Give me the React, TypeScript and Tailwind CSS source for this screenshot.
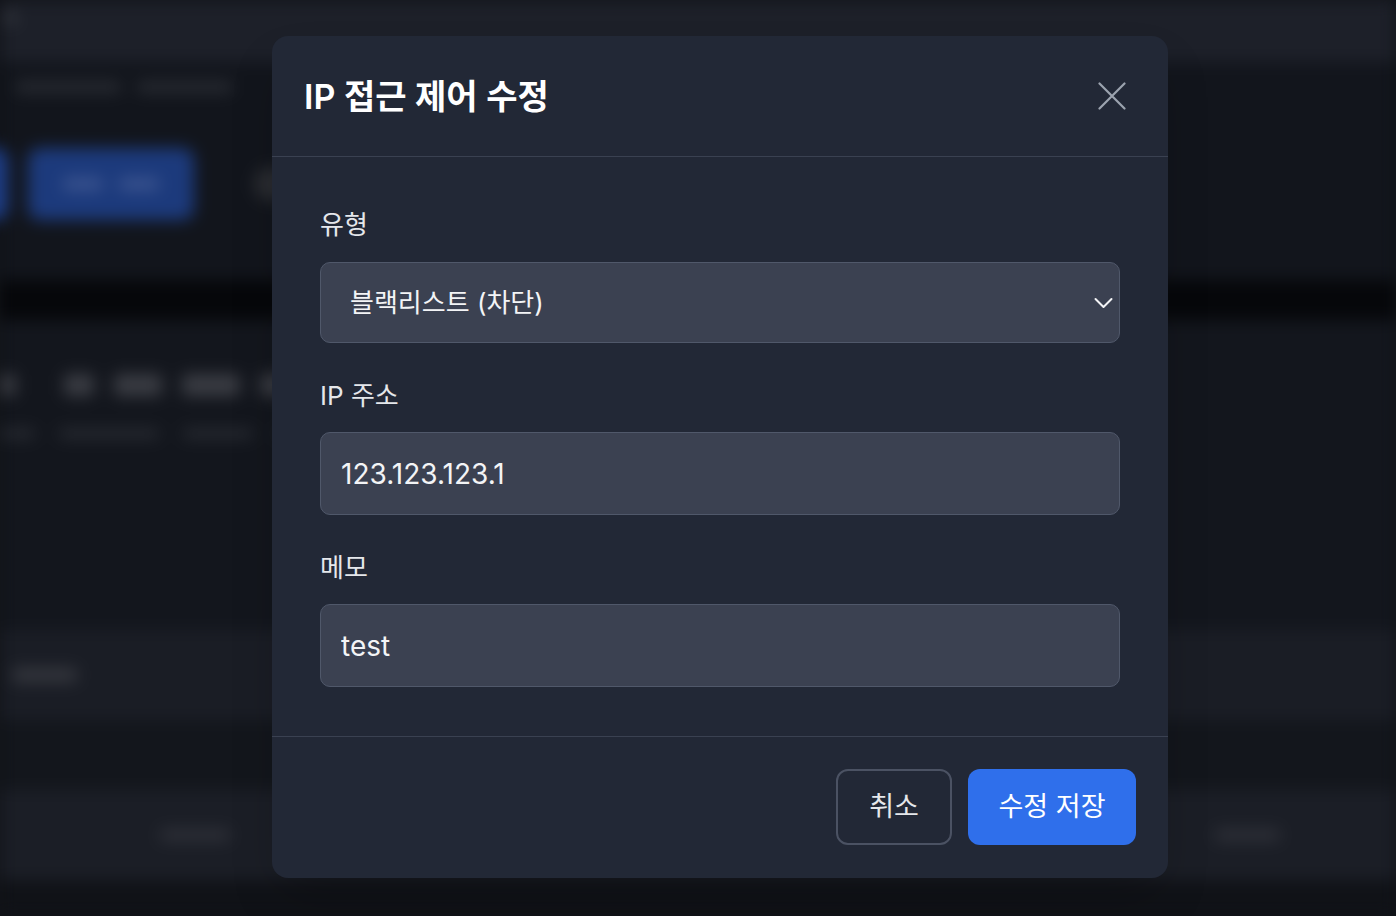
import { useState } from 'react';

function CloseIcon() {
  return (
    <svg width="28" height="28" viewBox="0 0 28 28" fill="none" stroke="#9ca3af" strokeWidth="2.2" strokeLinecap="round">
      <path d="M1.5 1.5L26.5 26.5M26.5 1.5L1.5 26.5" />
    </svg>
  );
}

function Chevron() {
  return (
    <svg width="19" height="11" viewBox="0 0 19 11" fill="none" stroke="#f3f4f6" strokeWidth="2" strokeLinecap="round" strokeLinejoin="round">
      <path d="M1.5 1.5L9.5 9.5L17.5 1.5" />
    </svg>
  );
}

// blurred page behind the dialog (unreadable, so drawn as soft blobs)
function BackgroundPage() {
  return (
    <div className="absolute inset-0 blur-[8px] flex flex-col">
      <div className="h-[62px] bg-[#1d2029] flex items-start px-1 pt-3">
        <span className="w-3 h-3 rounded-full bg-[#3a3d44]" />
      </div>
      <div className="h-[218px] bg-[#12151c] flex flex-col">
        <div className="flex items-center gap-4 pl-4 pt-[20px]">
          <span className="w-[105px] h-[10px] rounded bg-[#2b2e35]" />
          <span className="w-[95px] h-[10px] rounded bg-[#2b2e35]" />
        </div>
        <div className="flex items-center gap-5 pt-[56px] -ml-[30px]">
          <div className="w-[38px] h-[72px] rounded-xl bg-[#1d3d86]" />
          <div className="w-[166px] h-[72px] rounded-xl bg-[#1c3a7c] flex items-center justify-center gap-4">
            <span className="w-[40px] h-[12px] rounded bg-[#3c5590]" />
            <span className="w-[40px] h-[12px] rounded bg-[#3c5590]" />
          </div>
          <div className="w-[34px] h-[34px] rounded-full bg-[#2a2c31] ml-10" />
        </div>
      </div>
      <div className="h-[40px] bg-[#06070a]" />
      <div className="h-[310px] bg-[#13161d] flex flex-col pt-[52px] gap-[30px]">
        <div className="flex items-center gap-5 h-[26px]">
          <span className="w-[16px] h-[22px] rounded bg-[#3a3c43]" />
          <span className="w-[30px] h-[22px] rounded bg-[#3a3c43] ml-7" />
          <span className="w-[48px] h-[22px] rounded bg-[#3a3c43]" />
          <span className="w-[58px] h-[22px] rounded bg-[#3a3c43]" />
          <span className="w-[30px] h-[22px] rounded bg-[#3a3c43]" />
        </div>
        <div className="flex items-center gap-6 h-[10px]">
          <span className="w-[35px] h-[9px] rounded bg-[#2a2d34]" />
          <span className="w-[100px] h-[9px] rounded bg-[#2a2d34]" />
          <span className="w-[70px] h-[9px] rounded bg-[#2a2d34]" />
          <span className="w-[20px] h-[9px] rounded bg-[#2a2d34]" />
        </div>
      </div>
      <div className="h-[90px] bg-[#1a1d25] flex items-center pl-3">
        <span className="w-[65px] h-[14px] rounded bg-[#35373e]" />
      </div>
      <div className="h-[70px] bg-[#13161c]" />
      <div className="h-[90px] bg-[#1b1e26] flex items-center">
        <span className="ml-[160px] w-[70px] h-[12px] rounded bg-[#2e3038]" />
        <span className="ml-auto mr-[116px] w-[65px] h-[12px] rounded bg-[#2e3038]" />
      </div>
      <div className="flex-1 bg-[#101217]" />
    </div>
  );
}

export default function App() {
  const [type, setType] = useState('black');
  const [ip, setIp] = useState('123.123.123.1');
  const [memo, setMemo] = useState('test');

  return (
    <div className="relative h-[916px] overflow-hidden bg-[#111318] font-['Inter','Noto_Sans_CJK_KR',sans-serif]">
      <BackgroundPage />

      <div className="absolute inset-0 flex justify-center pt-[36px] pl-[44px]">
        <div className="w-[896px] h-[842px] rounded-2xl bg-[#222836] flex flex-col shadow-2xl">
          {/* Header */}
          <div className="h-[121px] shrink-0 flex items-center justify-between px-8 border-b border-[#3a4151]">
            <h2 className="text-[34px] font-semibold text-white">IP 접근 제어 수정</h2>
            <button className="w-[44px] h-[44px] flex items-center justify-center mr-0.5">
              <CloseIcon />
            </button>
          </div>

          {/* Body */}
          <div className="px-12 pt-[52px] pb-[49px] flex flex-col gap-[37px] border-b border-[#3a4151]">
            <div>
              <label className="block text-[26px] leading-8 mb-[21px] text-[#e5e7eb]">유형</label>
              <div className="relative">
                <select
                  value={type}
                  onChange={(e) => setType(e.target.value)}
                  className="appearance-none w-full h-[81px] rounded-[10px] bg-[#3b4151] border border-[#50586a] pl-[29px] pr-12 text-[26px] text-[#f3f4f6] outline-none"
                >
                  <option value="black">블랙리스트 (차단)</option>
                  <option value="white">화이트리스트 (허용)</option>
                </select>
                <span className="pointer-events-none absolute right-[7px] top-1/2 -translate-y-1/2 flex">
                  <Chevron />
                </span>
              </div>
            </div>

            <div>
              <label className="block text-[26px] leading-8 mb-5 text-[#e5e7eb]">IP 주소</label>
              <input
                value={ip}
                onChange={(e) => setIp(e.target.value)}
                className="w-full h-[83px] rounded-[10px] bg-[#3b4151] border border-[#50586a] px-5 text-[28px] text-[#f3f4f6] outline-none"
              />
            </div>

            <div>
              <label className="block text-[26px] leading-8 mb-5 text-[#e5e7eb]">메모</label>
              <input
                value={memo}
                onChange={(e) => setMemo(e.target.value)}
                className="w-full h-[83px] rounded-[10px] bg-[#3b4151] border border-[#50586a] px-5 text-[28px] text-[#f3f4f6] outline-none"
              />
            </div>
          </div>

          {/* Footer */}
          <div className="flex justify-end gap-4 p-8">
            <button className="w-[116px] h-[76px] rounded-xl border-2 border-[#4b5263] text-[27px] text-[#e5e7eb]">
              취소
            </button>
            <button className="w-[168px] h-[76px] rounded-xl bg-[#2f6feb] text-[27px] text-white">
              수정 저장
            </button>
          </div>
        </div>
      </div>
    </div>
  );
}
